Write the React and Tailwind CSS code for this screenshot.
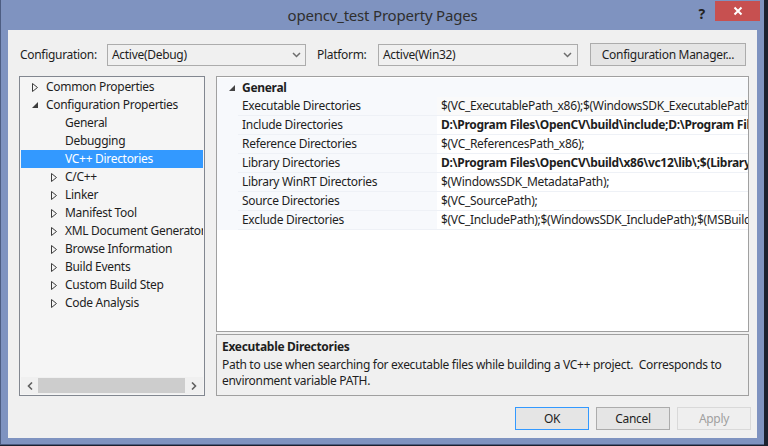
const font = { fontFamily: '"Noto Sans", "Open Sans", sans-serif' };

const RightTri = () => (
  <svg width="6" height="9" viewBox="0 0 6 9" className="shrink-0">
    <path d="M0.5 0.5 L5.5 4.5 L0.5 8.5 Z" fill="none" stroke="#3c3c3c" strokeWidth="1" />
  </svg>
);

const DownTri = ({ color = '#3c3c3c' }) => (
  <svg width="6" height="6" viewBox="0 0 6 6" className="shrink-0">
    <path d="M6 0 L6 6 L0 6 Z" fill={color} />
  </svg>
);

const Chevron = () => (
  <svg width="9" height="6" viewBox="0 0 9 6">
    <path d="M1 1 L4.5 4.5 L8 1" fill="none" stroke="#6d6d6d" strokeWidth="1.5" />
  </svg>
);

const treeItems = [
  { label: 'Common Properties', level: 0, arrow: 'right' },
  { label: 'Configuration Properties', level: 0, arrow: 'down' },
  { label: 'General', level: 1 },
  { label: 'Debugging', level: 1 },
  { label: 'VC++ Directories', level: 1, selected: true },
  { label: 'C/C++', level: 1, arrow: 'right' },
  { label: 'Linker', level: 1, arrow: 'right' },
  { label: 'Manifest Tool', level: 1, arrow: 'right' },
  { label: 'XML Document Generator', level: 1, arrow: 'right' },
  { label: 'Browse Information', level: 1, arrow: 'right' },
  { label: 'Build Events', level: 1, arrow: 'right' },
  { label: 'Custom Build Step', level: 1, arrow: 'right' },
  { label: 'Code Analysis', level: 1, arrow: 'right' },
];

const props = [
  { name: 'Executable Directories', value: '$(VC_ExecutablePath_x86);$(WindowsSDK_ExecutablePath);$(VS_ExecutablePath);$(MSBuild_ExecutablePath)', selected: true },
  { name: 'Include Directories', value: 'D:\\Program Files\\OpenCV\\build\\include;D:\\Program Files\\OpenCV\\build\\include\\opencv', bold: true },
  { name: 'Reference Directories', value: '$(VC_ReferencesPath_x86);' },
  { name: 'Library Directories', value: 'D:\\Program Files\\OpenCV\\build\\x86\\vc12\\lib\\;$(LibraryPath)', bold: true },
  { name: 'Library WinRT Directories', value: '$(WindowsSDK_MetadataPath);' },
  { name: 'Source Directories', value: '$(VC_SourcePath);' },
  { name: 'Exclude Directories', value: '$(VC_IncludePath);$(WindowsSDK_IncludePath);$(MSBuild_ExecutablePath);$(VC_LibraryPath_x86);' },
];

function TreeRow({ item }) {
  return (
    <div
      className={`h-[18px] flex items-center whitespace-nowrap overflow-hidden ${item.selected ? 'bg-[#3399ff] text-white' : 'text-[#1e1e1e]'}`}
      style={{ paddingLeft: item.level === 0 ? 11 : 30 }}
    >
      <div className="w-[14px] shrink-0 flex items-center">
        {item.arrow === 'right' && <RightTri />}
        {item.arrow === 'down' && <DownTri />}
      </div>
      <span>{item.label}</span>
    </div>
  );
}

export default function App() {
  return (
    <div className="w-[768px] h-[446px] bg-[#1c2230] overflow-hidden text-[12px] tracking-[-0.3px]" style={font}>
      <div className="w-[764px] h-[445px] bg-[#7f93c0] border-l border-b border-[#4d5d82] flex flex-col">
        {/* title bar */}
        <div className="h-[30px] relative flex items-center justify-center">
          <span className="text-[15px] text-[#2f2f2f] tracking-[-0.2px]">opencv_test Property Pages</span>
          <div className="absolute right-[4px] top-[1px] flex items-start">
            <span className="text-[14px] font-bold text-[#222] mr-[10px] mt-[2px]">?</span>
            <div className="w-[45px] h-[20px] bg-[#c75050] flex items-center justify-center">
              <svg width="10" height="10" viewBox="0 0 10 10">
                <path d="M1.5 1.5 L8.5 8.5 M8.5 1.5 L1.5 8.5" stroke="white" strokeWidth="2" />
              </svg>
            </div>
          </div>
        </div>

        {/* client area */}
        <div className="ml-[7px] w-[749px] h-[408px] bg-[#f0f0f0] flex flex-col pt-[13px] pl-[11px]">
          {/* configuration row */}
          <div className="h-[23px] flex items-center text-[#1e1e1e]">
            <span className="w-[88px] pl-[1px]">Configuration:</span>
            <div className="w-[199px] h-[22px] border border-[#acacac] bg-[#f0f0f0] flex items-center justify-between pl-[4px] pr-[4px]">
              <span>Active(Debug)</span>
              <Chevron />
            </div>
            <span className="ml-[11px] w-[61px]">Platform:</span>
            <div className="w-[200px] h-[22px] border border-[#acacac] bg-[#f0f0f0] flex items-center justify-between pl-[4px] pr-[5px]">
              <span>Active(Win32)</span>
              <Chevron />
            </div>
            <div className="ml-[12px] w-[156px] h-[23px] border border-[#acacac] bg-[#e5e5e5] flex items-center justify-center">
              Configuration Manager...
            </div>
          </div>

          {/* main area */}
          <div className="mt-[10px] h-[320px] flex">
            {/* tree */}
            <div className="w-[186px] h-[320px] border border-[#828790] bg-[#f5f5f5] flex flex-col">
              <div className="flex-1 pt-[1px] px-[1px]">
                {treeItems.map((item) => (
                  <TreeRow key={item.label} item={item} />
                ))}
              </div>
              <div className="h-[17px] mb-[1px] mx-[1px] flex items-center bg-[#f0f0f0]">
                <div className="w-[17px] flex justify-center">
                  <svg width="6" height="8" viewBox="0 0 6 8">
                    <path d="M5 0.5 L1.5 4 L5 7.5" fill="none" stroke="#606060" strokeWidth="1.6" />
                  </svg>
                </div>
                <div className="w-[147px] h-[15px] bg-[#cdcdcd]" />
                <div className="flex-1 flex justify-center">
                  <svg width="6" height="8" viewBox="0 0 6 8">
                    <path d="M1 0.5 L4.5 4 L1 7.5" fill="none" stroke="#606060" strokeWidth="1.6" />
                  </svg>
                </div>
              </div>
            </div>

            {/* property grid + description */}
            <div className="ml-[11px] w-[533px] flex flex-col">
              <div className="h-[258px] border border-[#a0a0a0] bg-white flex flex-col pt-[1px]">
                <div className="h-[19px] flex items-center bg-[#f7f9fc]">
                  <div className="w-[25px] flex justify-end pr-[7px]">
                    <DownTri color="#444" />
                  </div>
                  <span className="font-bold text-[#1e1e1e]">General</span>
                </div>
                {props.map((p) => (
                  <div key={p.name} className="h-[19px] flex">
                    <div className="w-[21px] bg-[#f7f9fc]" />
                    <div className="w-[199px] flex items-center pl-[4px] bg-[#f7f9fc] border-b border-[#eef1f6] text-[#1e1e1e] whitespace-nowrap">
                      {p.name}
                    </div>
                    <div
                      className={`flex-1 flex items-center pl-[4px] border-b border-[#eef1f6] whitespace-nowrap overflow-hidden text-[#1e1e1e] ${p.bold ? 'font-bold' : ''} ${p.selected ? 'bg-[#fafafa]' : 'bg-white'}`}
                    >
                      {p.value}
                    </div>
                  </div>
                ))}
                <div className="flex-1" />
              </div>
              <div className="mt-[2px] h-[62px] border border-[#a0a0a0] bg-[#f0f0f0] pl-[5px] pt-[4px] text-[#1e1e1e] leading-[16px] whitespace-nowrap overflow-hidden">
                <div className="font-bold mb-[2px]">Executable Directories</div>
                <div>Path to use when searching for executable files while building a VC++ project.&nbsp; Corresponds to</div>
                <div>environment variable PATH.</div>
              </div>
            </div>
          </div>

          {/* buttons */}
          <div className="mt-[11px] h-[23px] flex justify-end pr-[6px] gap-[7px]">
            <div className="w-[74px] h-[23px] border border-[#3399ff] bg-[#e5e5e5] flex items-center justify-center text-[#1e1e1e]">OK</div>
            <div className="w-[74px] h-[23px] border border-[#acacac] bg-[#e5e5e5] flex items-center justify-center text-[#1e1e1e]">Cancel</div>
            <div className="w-[74px] h-[23px] border border-[#d9d9d9] bg-[#efefef] flex items-center justify-center text-[#a0a0a0]">Apply</div>
          </div>
        </div>
      </div>
    </div>
  );
}
